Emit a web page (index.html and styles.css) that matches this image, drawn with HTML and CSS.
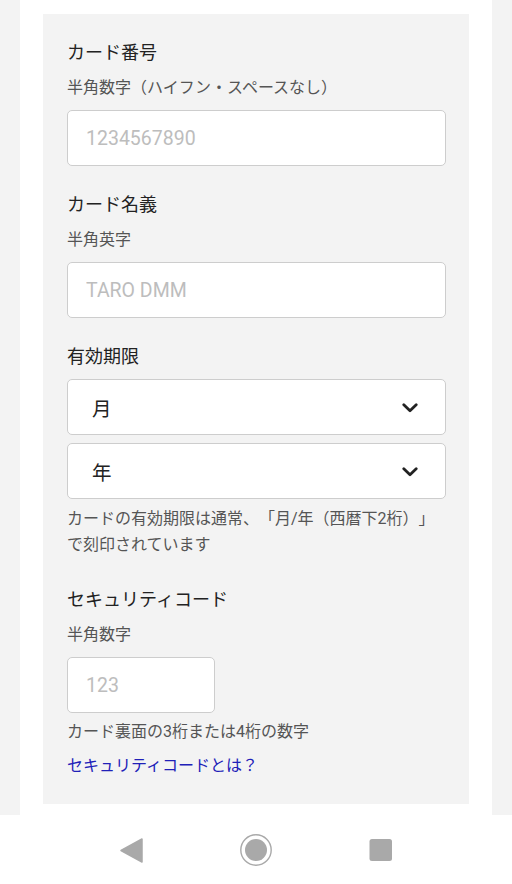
FILE: index.html
```html
<!DOCTYPE html>
<html lang="ja">
<head>
<meta charset="utf-8">
<title>カード情報</title>
<link rel="stylesheet" href="styles.css">
</head>
<body>
<div class="page">
  <div class="sheet">
    <form class="panel">
      <div class="title">カード番号</div>
      <div class="sub">半角数字（ハイフン・スペースなし）</div>
      <input class="field" type="text" placeholder="1234567890">

      <div class="title gap-top">カード名義</div>
      <div class="sub">半角英字</div>
      <input class="field" type="text" placeholder="TARO DMM">

      <div class="title gap-top">有効期限</div>
      <div class="selects">
        <div class="select"><span>月</span><svg class="chev" width="16" height="10" viewBox="0 0 16 10"><polyline points="1.8,1.8 8,7.8 14.2,1.8" fill="none" stroke="#222" stroke-width="2.8" stroke-linecap="round" stroke-linejoin="round"/></svg></div>
        <div class="select"><span>年</span><svg class="chev" width="16" height="10" viewBox="0 0 16 10"><polyline points="1.8,1.8 8,7.8 14.2,1.8" fill="none" stroke="#222" stroke-width="2.8" stroke-linecap="round" stroke-linejoin="round"/></svg></div>
      </div>
      <p class="note">カードの有効期限は通常、「月/年（西暦下2桁）」<br>で刻印されています</p>

      <div class="title gap-top-lg">セキュリティコード</div>
      <div class="sub">半角数字</div>
      <input class="field short" type="text" placeholder="123">
      <p class="note small">カード裏面の3桁または4桁の数字</p>
      <a class="link" href="#">セキュリティコードとは？</a>
    </form>
  </div>
</div>
<nav class="navbar">
  <svg class="nav-icon" width="32" height="32" viewBox="0 0 32 32"><polygon points="27,5 27,28 6,16.5" fill="#a9a9a9" stroke="#a9a9a9" stroke-width="1.5" stroke-linejoin="round"/></svg>
  <svg class="nav-icon" width="32" height="32" viewBox="0 0 32 32"><circle cx="16" cy="16" r="15.2" fill="none" stroke="#a9a9a9" stroke-width="1.4"/><circle cx="16" cy="16" r="11" fill="#a9a9a9"/></svg>
  <svg class="nav-icon" width="32" height="32" viewBox="0 0 32 32"><rect x="4.5" y="5" width="22.5" height="22" rx="2.5" fill="#a9a9a9"/></svg>
</nav>
</body>
</html>
```
FILE: styles.css
```css
* { box-sizing: border-box; }
html, body {
  margin: 0;
  padding: 0;
  background: #ffffff;
  font-family: Roboto, "Noto Sans CJK JP", sans-serif;
  color: #222;
  text-spacing-trim: space-all;
}
.page {
  background: #f3f3f3;
  padding: 0 20px;
}
.sheet {
  background: #ffffff;
  padding: 14px 23px 11px;
}
.panel {
  display: flex;
  flex-direction: column;
  align-items: flex-start;
  background: #f3f3f3;
  padding: 27px 23px 27px 24px;
}
.title {
  font-size: 18px;
  line-height: 24px;
  color: #222;
}
.gap-top { margin-top: 27px; }
.gap-top-lg { margin-top: 30px; }
.sub {
  margin-top: 12px;
  font-size: 16px;
  line-height: 22px;
  color: #555;
}
.field {
  display: block;
  margin-top: 11px;
  width: 100%;
  height: 56px;
  border: 1px solid #cdcdcd;
  border-radius: 5px;
  background: #fff;
  padding: 0 18px;
  font-family: Roboto, "Noto Sans CJK JP", sans-serif;
  font-size: 19.5px;
  color: #222;
  outline: none;
}
.field::placeholder { color: #bdbdbd; }
.field.short { width: 148px; }
.selects {
  margin-top: 10px;
  width: 100%;
  display: flex;
  flex-direction: column;
  gap: 8px;
}
.select {
  height: 56px;
  border: 1px solid #cdcdcd;
  border-radius: 5px;
  background: #fff;
  display: flex;
  align-items: center;
  justify-content: space-between;
  padding: 0 27px 0 24px;
  font-size: 19.5px;
  color: #222;
}
.chev { display: block; margin-top: 2px; }
.note {
  margin: 7px 0 0;
  font-size: 16px;
  line-height: 26px;
  color: #555;
  white-space: nowrap;
}
.note.small {
  margin-top: 8px;
  line-height: 22px;
}
.link {
  margin-top: 12px;
  font-size: 16px;
  line-height: 22px;
  color: #2020b8;
  text-decoration: none;
}
.navbar {
  height: 69px;
  background: #fff;
  display: flex;
  justify-content: center;
  align-items: center;
  gap: 93px;
  padding-top: 1px;
}
.nav-icon { display: block; }
```
